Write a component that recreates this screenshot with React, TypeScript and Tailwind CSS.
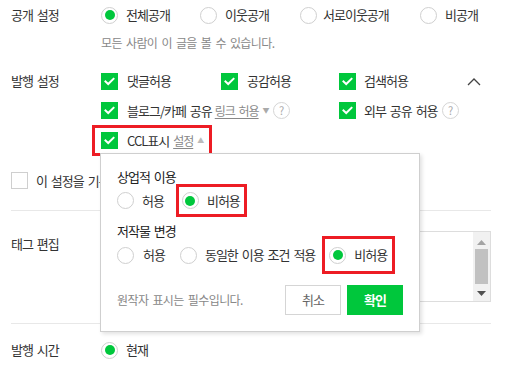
import React from "react";

function Radio({ checked }: { checked?: boolean }) {
  return (
    <span className="flex h-[17px] w-[17px] shrink-0 items-center justify-center rounded-full border border-[#cfcfcf] bg-white">
      {checked && <span className="h-[10px] w-[10px] rounded-full bg-[#00c73c]" />}
    </span>
  );
}

function Check({ checked = true }: { checked?: boolean }) {
  if (!checked)
    return <span className="block h-[17px] w-[17px] shrink-0 border border-[#cfcfcf] bg-white" />;
  return (
    <span className="flex h-[17px] w-[17px] shrink-0 items-center justify-center bg-[#00c73c]">
      <svg width="11" height="9" viewBox="0 0 11 9" fill="none">
        <path d="M1.5 4.5 L4.2 7 L9.5 1.8" stroke="white" strokeWidth="2" strokeLinecap="square" />
      </svg>
    </span>
  );
}

function Help() {
  return (
    <span className="flex h-[17px] w-[17px] shrink-0 items-center justify-center rounded-full border border-[#d5d5d5] text-[11px] leading-none text-[#aaa]">
      ?
    </span>
  );
}

export default function App() {
  return (
    <div
      className="relative h-[376px] w-[506px] overflow-hidden bg-white text-[12px] tracking-[-1px] text-[#333] [word-spacing:2px]"
      style={{ fontFamily: '"Noto Sans CJK KR", "Noto Sans", sans-serif' }}
    >
      <div className="pl-[11px]">
        {/* 공개 설정 */}
        <div className="flex h-[30px] items-center">
          <div className="w-[90px] text-[13px]">공개 설정</div>
          <div className="flex w-[99px] items-center gap-[8px]">
            <Radio checked />
            <span className="text-[13px]">전체공개</span>
          </div>
          <div className="flex w-[100px] items-center gap-[8px]">
            <Radio />
            <span className="text-[13px]">이웃공개</span>
          </div>
          <div className="flex w-[120px] items-center gap-[6px]">
            <Radio />
            <span className="text-[13px]">서로이웃공개</span>
          </div>
          <div className="flex items-center gap-[8px]">
            <Radio />
            <span className="text-[13px]">비공개</span>
          </div>
        </div>
        <div className="flex h-[26px] items-center pl-[90px] text-[12px] tracking-[-0.6px] text-[#888]">
          모든 사람이 이 글을 볼 수 있습니다.
        </div>

        {/* 발행 설정 */}
        <div className="mt-[10px] flex">
          <div className="flex h-[30px] w-[90px] items-center text-[13px]">발행 설정</div>
          <div className="flex flex-col">
            <div className="flex h-[30px] items-center">
              <div className="flex w-[120px] items-center gap-[9px]">
                <Check />
                <span className="text-[13px]">댓글허용</span>
              </div>
              <div className="flex w-[118px] items-center gap-[9px]">
                <Check />
                <span className="text-[13px]">공감허용</span>
              </div>
              <div className="flex w-[128px] items-center gap-[8px]">
                <Check />
                <span className="text-[13px]">검색허용</span>
              </div>
              <svg width="14" height="9" viewBox="0 0 14 9" fill="none" className="mt-[1px]">
                <path d="M1 8 L7 2 L13 8" stroke="#444" strokeWidth="1.3" />
              </svg>
            </div>
            <div className="flex h-[29px] items-center">
              <div className="flex w-[238px] items-center">
                <Check />
                <span className="ml-[9px] text-[13px]">블로그/카페 공유</span>
                <span className="ml-[3px] text-[12px] text-[#888] underline underline-offset-2">링크 허용</span>
                <span className="ml-[4px] text-[7px] text-[#aaa]">▼</span>
                <span className="ml-[4px]">
                  <Help />
                </span>
              </div>
              <div className="flex items-center">
                <Check />
                <span className="ml-[8px] text-[13px]">외부 공유 허용</span>
                <span className="ml-[4px]">
                  <Help />
                </span>
              </div>
            </div>
            <div className="-ml-[9px] flex h-[31px] w-[120px] items-center border-[3px] border-[#ed1c24] pl-[6px]">
              <Check />
              <span className="ml-[9px] text-[13px]">CCL표시</span>
              <span className="ml-[4px] text-[12px] text-[#888] underline underline-offset-2">설정</span>
              <span className="ml-[4px] text-[7px] text-[#bbb]">▲</span>
            </div>
          </div>
        </div>

        {/* 기본 유지 */}
        <div className="mt-[16px] flex h-[17px] items-center">
          <Check checked={false} />
          <span className="ml-[8px] w-[64px] overflow-hidden whitespace-nowrap text-[13px]">이 설정을 기본으로 유지</span>
        </div>
        <div className="mr-[15px] mt-[21px] border-t border-[#e8e8e8]" />

        {/* 태그 편집 */}
        <div className="flex pb-[21px] pt-[20px]">
          <div className="w-[90px] pt-[3px] text-[13px]">태그 편집</div>
          <div className="flex h-[71px] w-[390px] border border-[#ddd]">
            <div className="flex-1" />
            <div className="flex w-[17px] flex-col items-center bg-[#f1f1f1]">
              <svg width="9" height="5" viewBox="0 0 9 5" className="mt-[8px]">
                <path d="M0 5 L4.5 0 L9 5 Z" fill="#a3a3a3" />
              </svg>
              <div className="mt-[4px] h-[35px] w-[13px] bg-[#c1c1c1]" />
              <svg width="9" height="5" viewBox="0 0 9 5" className="mt-[7px]">
                <path d="M0 0 L4.5 5 L9 0 Z" fill="#505050" />
              </svg>
            </div>
          </div>
        </div>
        <div className="mr-[15px] border-t border-[#e8e8e8]" />

        {/* 발행 시간 */}
        <div className="flex h-[52px] items-center">
          <div className="w-[90px] text-[13px]">발행 시간</div>
          <Radio checked />
          <span className="ml-[8px] text-[13px]">현재</span>
        </div>
      </div>

      {/* CCL popup */}
      <div className="absolute left-[100px] top-[153px] flex h-[179px] w-[320px] flex-col border border-[#cfcfcf] bg-white pl-[16px] shadow-[2px_2px_4px_rgba(0,0,0,0.12)]">
        <div className="mt-[16px] h-[14px] text-[13px] leading-[14px] text-[#222]">상업적 이용</div>
        <div className="flex h-[33px] items-center">
          <Radio />
          <span className="ml-[8px] text-[13px]">허용</span>
          <div className="ml-[12px] flex h-[33px] items-center border-[3px] border-[#ed1c24] pl-[3px] pr-[4px]">
            <Radio checked />
            <span className="ml-[8px] text-[13px]">비허용</span>
          </div>
        </div>
        <div className="mt-[7px] h-[14px] text-[13px] leading-[14px] text-[#222]">저작물 변경</div>
        <div className="-mt-[2px] flex h-[38px] items-center">
          <Radio />
          <span className="ml-[9px] text-[13px]">허용</span>
          <span className="ml-[15px]">
            <Radio />
          </span>
          <span className="ml-[8px] text-[13px]">동일한 이용 조건 적용</span>
          <div className="ml-[7px] flex h-[38px] items-center border-[3px] border-[#ed1c24] pl-[4px] pr-[5px]">
            <Radio checked />
            <span className="ml-[8px] text-[13px]">비허용</span>
          </div>
        </div>
        <div className="mt-[11px] flex items-center">
          <span className="flex-1 text-[12px] tracking-[-0.6px] text-[#888]">원작자 표시는 필수입니다.</span>
          <button className="flex h-[30px] w-[56px] items-center justify-center border border-[#d5d5d5] bg-white text-[13px] text-[#666]">
            취소
          </button>
          <button className="ml-[6px] mr-[16px] flex h-[30px] w-[56px] items-center justify-center bg-[#00c73c] text-[13px] font-bold text-white">
            확인
          </button>
        </div>
      </div>
    </div>
  );
}
